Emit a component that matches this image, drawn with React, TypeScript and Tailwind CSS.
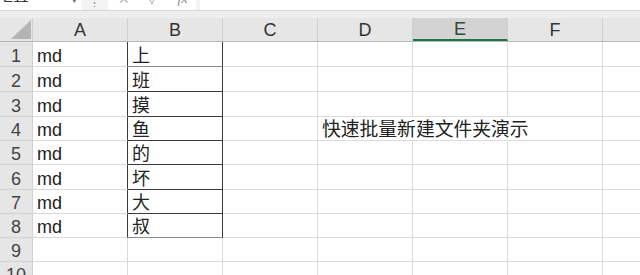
import React from 'react'

const cols = ['A', 'B', 'C', 'D', 'E', 'F', 'G']
const words = ['上', '班', '摸', '鱼', '的', '坏', '大', '叔']
const rowH = ['h-[25px]', 'h-[25px]', 'h-[25px]', 'h-[24px]', 'h-[24px]', 'h-[25px]', 'h-[24px]', 'h-[24px]', 'h-[24px]', 'h-[24px]']

const font = "font-['Liberation_Sans','Noto_Sans_CJK_SC',sans-serif]"

function Cell({ className = '', children }: { className?: string; children?: React.ReactNode }) {
  return (
    <div className={`flex h-full w-[95px] shrink-0 items-end border-b border-r border-[#dadada] pl-[4px] leading-[20px] whitespace-nowrap ${className}`}>
      {children}
    </div>
  )
}

export default function App() {
  return (
    <div className={`h-[275px] w-[640px] overflow-hidden bg-white text-[18px] text-[#222] ${font}`}>
      {/* formula bar, cut at the top */}
      <div className="flex h-[11px] overflow-hidden bg-[#f3f3f3] border-b border-[#d6d6d6]">
        <div className="flex w-[81px] shrink-0 items-start justify-between bg-white pl-[3px] pr-[4px]">
          <span className="-mt-[13px] text-[15px] leading-[20px] text-[#333]">E11</span>
          <span className="-mt-[6px] text-[9px] leading-[12px] text-[#666]">▾</span>
        </div>
        <div className="flex w-[27px] shrink-0 justify-center">
          <svg width="3" height="11" viewBox="0 0 3 11" className="-mt-[4px]">
            <circle cx="1.5" cy="3" r="1" fill="#999" />
            <circle cx="1.5" cy="7" r="1" fill="#999" />
            <circle cx="1.5" cy="11" r="1" fill="#999" />
          </svg>
        </div>
        <div className="flex w-[88px] shrink-0 items-start gap-[19px] bg-white pl-[10px]">
          <span className="-mt-[9px] text-[14px] leading-[16px] text-[#b5b5b5]">✕</span>
          <span className="-mt-[9px] text-[14px] leading-[16px] text-[#b5b5b5]">✓</span>
          <span className="-mt-[9px] font-['Liberation_Serif',serif] text-[14px] italic leading-[16px] text-[#888]">fx</span>
        </div>
        <div className="w-[4px] shrink-0" />
        <div className="flex-1 bg-white" />
      </div>
      <div className="h-[7px] bg-[#eeeeee]" />

      {/* column headers */}
      <div className="flex h-[24px] border-b border-[#b8b8b8] bg-[#e6e6e6]">
        <div className="flex w-[33px] shrink-0 items-end justify-end border-r border-[#cfcfcf] pb-[2px] pr-[1px]">
          <svg width="20" height="19" viewBox="0 0 20 19">
            <polygon points="20,0 20,19 0,19" fill="#b4b4b4" />
          </svg>
        </div>
        {cols.map((c) => (
          <div
            key={c}
            className={`flex w-[95px] shrink-0 items-center justify-center border-r border-[#d0d0d0] leading-[20px] ${
              c === 'E' ? 'border-b-2 border-b-[#217346] bg-[#d3d3d3] text-[#2f4a38]' : 'text-[#333]'
            }`}
          >
            {c}
          </div>
        ))}
      </div>

      {/* rows */}
      {rowH.map((h, i) => {
        const n = i + 1
        const inTable = i < 8
        return (
          <div key={n} className={`flex ${h}`}>
            <div className="flex h-full w-[33px] shrink-0 items-end justify-center border-b border-r border-[#d2d2d2] bg-[#e6e6e6] leading-[20px] text-[#444]">
              {n}
            </div>
            <Cell className={inTable ? 'border-r-[#3a3a3a]' : ''}>{inTable ? 'md' : ''}</Cell>
            <Cell className={inTable ? `border-r-[#3a3a3a] ${i === 0 || i === 7 ? 'border-b-[#8a8a8a]' : 'border-b-[#3a3a3a]'}` : ''}>
              {inTable ? words[i] : ''}
            </Cell>
            <Cell />
            {i === 3 ? (
              <div className="flex h-full w-[285px] shrink-0 items-end border-b border-r border-[#dadada] pl-[4px] text-[18.8px] leading-[20px] whitespace-nowrap">
                快速批量新建文件夹演示
              </div>
            ) : (
              <>
                <Cell />
                <Cell />
                <Cell />
              </>
            )}
            <Cell />
          </div>
        )
      })}
    </div>
  )
}
